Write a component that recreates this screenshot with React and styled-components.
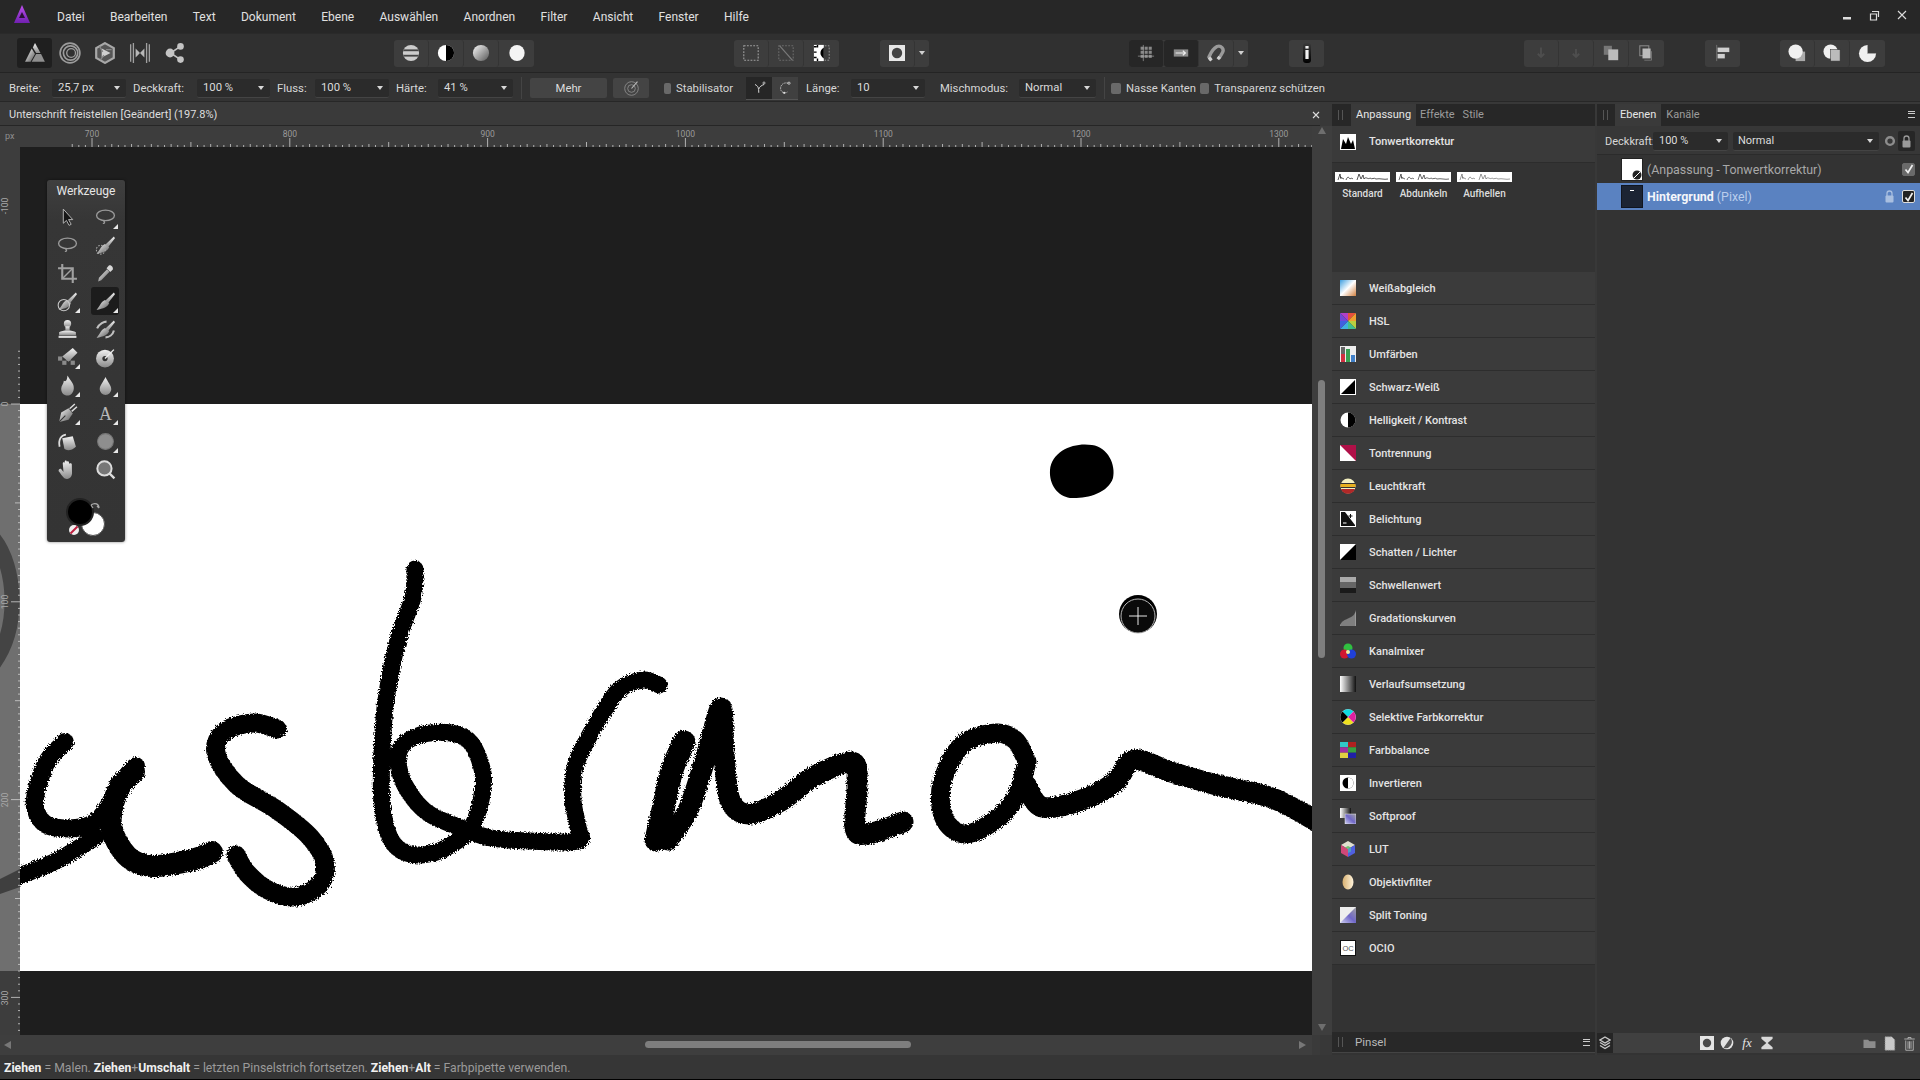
import React from 'react';
import styled, { createGlobalStyle } from 'styled-components';

const GlobalStyle = createGlobalStyle`
  html, body { margin: 0; padding: 0; background: #000; }
  body { font-family: Roboto, "Liberation Sans", sans-serif; }
`;

// catmull-rom through the points, good enough for handwriting
const smooth = pts => {
  let d = `M${pts[0][0]} ${pts[0][1]}`;
  for (let i = 0; i < pts.length - 1; i++) {
    const p0 = pts[i - 1] || pts[i];
    const p1 = pts[i];
    const p2 = pts[i + 1];
    const p3 = pts[i + 2] || p2;
    const c1 = [p1[0] + (p2[0] - p0[0]) / 6, p1[1] + (p2[1] - p0[1]) / 6];
    const c2 = [p2[0] - (p3[0] - p1[0]) / 6, p2[1] - (p3[1] - p1[1]) / 6];
    d += ` C${c1[0]} ${c1[1]} ${c2[0]} ${c2[1]} ${p2[0]} ${p2[1]}`;
  }
  return d;
};

const STROKES = [
  { w: 18, pts: [[65, 742], [48, 760], [38, 785], [35, 807], [47, 825], [76, 828], [98, 820], [115, 795], [129, 773], [136, 766]] },
  { w: 22, pts: [[134, 772], [118, 790], [111, 825], [127, 856], [152, 866], [192, 860], [212, 852]] },
  { w: 17, pts: [[96, 837], [58, 860], [22, 875], [0, 885]] },
  { w: 19, pts: [[277, 729], [254, 723], [225, 731], [216, 753], [237, 785], [277, 810], [310, 837], [325, 863], [319, 885], [295, 897], [268, 890], [247, 873], [236, 855]] },
  { w: 17, pts: [[415, 569], [413, 597], [398, 640], [386, 700], [382, 753], [382, 803], [390, 838], [406, 853], [429, 854], [451, 845], [471, 828], [481, 800], [483, 773], [471, 743], [451, 733], [420, 735], [400, 749], [400, 773], [413, 798], [431, 815], [464, 829], [491, 838], [530, 841], [578, 841], [578, 827], [573, 800], [575, 767], [592, 731], [618, 691], [643, 680], [659, 685]] },
  { w: 23, pts: [[656, 840], [664, 805], [672, 770], [684, 742]] },
  { w: 21, pts: [[668, 840], [689, 808], [707, 753], [721, 708], [724, 753], [730, 800], [749, 814], [781, 801], [813, 777], [852, 762], [857, 787], [855, 828], [868, 834], [903, 822]] },
  { w: 19, pts: [[1024, 755], [1015, 740], [996, 733], [962, 745], [942, 783], [944, 818], [964, 834], [994, 821], [1016, 797], [1027, 762]] },
  { w: 21, pts: [[1026, 785], [1042, 807], [1079, 801], [1114, 783], [1134, 760], [1171, 772], [1217, 785], [1272, 798], [1318, 822]] },
];

const PX_PER_100 = 197.8;

const Page = styled.div`
  width: 1920px;
  height: 1080px;
  display: flex;
  flex-direction: column;
  overflow: hidden;
  background: #000;
  color: #d6d6d6;
  font-size: 12px;
`;

const MenuBar = styled.div`
  height: 33px;
  flex: none;
  display: flex;
  align-items: center;
  background: #272727;
  padding: 1px 0 0 12px;
  box-sizing: border-box;
`;

const Logo = styled.svg`
  width: 20px;
  height: 22px;
  margin: -4px 25px 0 0;
  flex: none;
`;

const MenuItem = styled.div`
  margin-right: 25.4px;
  font-size: 12px;
  color: #e0e0e0;
`;

const WindowControls = styled.div`
  margin: -4px 0 0 auto;
  display: flex;
  align-items: center;
  gap: 17px;
  padding-right: 13px;
`;

const Toolbar = styled.div`
  height: 40px;
  flex: none;
  display: flex;
  align-items: center;
  background: #303030;
  border-top: 1px solid #2a2a2a;
  border-bottom: 1px solid #242424;
  box-sizing: border-box;
  padding-left: 17px;
`;

const ToolGroup = styled.div`
  display: flex;
  height: 27px;
  margin-left: ${p => p.$ml || 0}px;
  border-radius: 3px;
  background: ${p => (p.$plain ? 'transparent' : '#3d3d3d')};
`;

const ToolbarButton = styled.div`
  width: 35px;
  height: ${p => (p.$active ? 30 : 27)}px;
  margin-top: ${p => (p.$active ? -2 : 0)}px;
  display: flex;
  align-items: center;
  justify-content: center;
  box-sizing: border-box;
  border-radius: 3px;
  background: ${p => (p.$active ? '#1f1f1f' : p.$dark ? '#262626' : 'transparent')};
  border-right: ${p => (p.$plain ? 'none' : '1px solid #343434')};
  &:last-child { border-right: none; }
`;

const GroupArrow = styled.div`
  width: 14px;
  display: flex;
  align-items: center;
  justify-content: center;
  &::after {
    content: '';
    border: 3px solid transparent;
    border-top: 4px solid #d0d0d0;
    margin-top: 3px;
  }
`;

const ContextBar = styled.div`
  height: 29px;
  flex: none;
  display: flex;
  align-items: center;
  background: #333;
  padding: 2px 0 0 9px;
  font-size: 11.3px;
  box-sizing: border-box;
  border-bottom: 1px solid #272727;
`;

const FieldLabel = styled.div`
  width: ${p => p.$w}px;
  flex: none;
  white-space: nowrap;
  color: #d8d8d8;
`;

const Combo = styled.div`
  width: ${p => p.$w}px;
  height: 19px;
  flex: none;
  box-sizing: border-box;
  display: flex;
  align-items: center;
  padding-left: ${p => p.$pad || 6}px;
  margin-right: ${p => p.$mr ?? 7}px;
  background: #2b2b2b;
  border-bottom: 1px solid #444;
  border-radius: 2px;
  color: #dcdcdc;
  position: relative;
  &::after {
    content: '';
    position: absolute;
    right: 6px;
    top: 7px;
    border: 3px solid transparent;
    border-top: 4px solid #d8d8d8;
  }
`;

const Divider = styled.div`
  width: 1px;
  height: 22px;
  background: #444;
  margin: 0 ${p => p.$right ?? 8}px 0 ${p => p.$left ?? 1}px;
  flex: none;
`;

const FlatButton = styled.div`
  width: ${p => p.$w}px;
  height: 20px;
  flex: none;
  display: flex;
  align-items: center;
  justify-content: center;
  margin-right: 6px;
  background: #444;
  border-radius: 2px;
  color: #ddd;
`;

const CheckLabel = styled.div`
  display: flex;
  align-items: center;
  gap: 5px;
  flex: none;
  width: ${p => p.$w}px;
  margin-left: ${p => p.$ml || 0}px;
  white-space: nowrap;
  &::before {
    content: '';
    width: 10px;
    height: 11px;
    border-radius: 2px;
    background: #696969;
  }
`;

const ToggleGroup = styled.div`
  display: flex;
  flex: none;
  width: 52px;
  height: 22px;
  margin: 0 8px 0 13px;
  border-bottom: 1px solid #555;
`;

const ToggleHalf = styled.div`
  flex: 1;
  display: flex;
  align-items: center;
  justify-content: center;
  background: ${p => (p.$dark ? '#262626' : '#404040')};
`;

const Main = styled.div`
  height: 953px;
  flex: none;
  display: flex;
  background: #3a3a3a;
`;

const DocColumn = styled.div`
  width: 1320px;
  flex: none;
  display: flex;
  flex-direction: column;
`;

const DocTitle = styled.div`
  height: 24px;
  flex: none;
  display: flex;
  align-items: center;
  justify-content: space-between;
  box-sizing: border-box;
  padding: 2px 0 0 9px;
  background: #3a3a3a;
  border-bottom: 1px solid #262626;
  font-size: 11px;
  color: #dedede;
`;

const RulerRow = styled.div`
  height: 21px;
  flex: none;
  display: flex;
  background: #3d3d3d;
`;

const RulerCorner = styled.div`
  width: 20px;
  flex: none;
  font-size: 9px;
  color: #8f8f8f;
  padding: 5px 0 0 5px;
  box-sizing: border-box;
`;

const RulerSvg = styled.svg`
  display: block;
  flex: none;
`;

const ScrollTrackV = styled.div`
  width: 20px;
  flex: none;
  position: relative;
  background: #3e3e3e;
`;

const ViewRow = styled.div`
  height: 888px;
  flex: none;
  display: flex;
`;

const Viewport = styled.div`
  width: 1292px;
  height: 888px;
  flex: none;
  position: relative;
  display: flex;
  flex-direction: column;
  background: #1e1e1e;
`;

const Artboard = styled.svg`
  display: block;
  width: 1292px;
  height: 567px;
  margin-top: 257px;
  background: #fff;
`;

const ThumbV = styled.div`
  position: absolute;
  left: 6px;
  top: 233px;
  width: 7px;
  height: 278px;
  border-radius: 4px;
  background: #7e7e7e;
`;

const Arrow = styled.div`
  position: absolute;
  width: 0;
  height: 0;
  border: 4px solid transparent;
  ${p => p.$dir === 'up' && `border-bottom: 7px solid #6e6e6e; left: 6px; top: -3px;`}
  ${p => p.$dir === 'down' && `border-top: 7px solid #6e6e6e; left: 6px; bottom: 0px;`}
  ${p => p.$dir === 'left' && `border-right: 7px solid #777; left: 0px; top: 6px;`}
  ${p => p.$dir === 'right' && `border-left: 7px solid #777; right: 2px; top: 6px;`}
`;

const ScrollTrackH = styled.div`
  height: 20px;
  flex: none;
  position: relative;
  background: #3e3e3e;
  margin-right: 8px;
`;

const ThumbH = styled.div`
  position: absolute;
  left: 645px;
  top: 6px;
  width: 266px;
  height: 7px;
  border-radius: 4px;
  background: #7e7e7e;
`;

const ToolsPanel = styled.div`
  position: absolute;
  left: 27px;
  top: 33px;
  width: 78px;
  height: 362px;
  box-sizing: border-box;
  background: linear-gradient(#3f3f3f, #363636 40px, #343434);
  border-radius: 3px;
  box-shadow: 0 0 3px rgba(0, 0, 0, 0.5);
`;

const ToolsTitle = styled.div`
  height: 22px;
  line-height: 22px;
  text-align: center;
  font-size: 12px;
  color: #e6e6e6;
`;

const ToolsGrid = styled.div`
  display: grid;
  grid-template-columns: 28px 28px;
  grid-auto-rows: 28px;
  column-gap: 10px;
  padding: 1px 0 0 6px;
`;

const ToolButton = styled.div`
  position: relative;
  display: flex;
  align-items: center;
  justify-content: center;
  border-radius: 3px;
  background: ${p => (p.$active ? '#1c1c1c' : 'transparent')};
  ${p =>
    p.$more &&
    `&::after {
      content: '';
      position: absolute;
      right: 1px;
      bottom: 2px;
      border-style: solid;
      border-width: 0 0 5px 5px;
      border-color: transparent transparent #e8e8e8 transparent;
    }`}
`;

const ColorChips = styled.svg`
  display: block;
  width: 78px;
  height: 70px;
`;

const Dock = styled.div`
  flex: 1;
  display: flex;
  padding: 2px 0 0 12px;
  gap: 2px;
  background: #383838;
`;

const AdjustColumn = styled.div`
  width: 263px;
  flex: none;
  display: flex;
  flex-direction: column;
  background: #333;
`;

const LayersColumn = styled.div`
  flex: 1;
  display: flex;
  flex-direction: column;
  background: #333;
`;

const TabBar = styled.div`
  height: 22px;
  flex: none;
  display: flex;
  align-items: stretch;
  position: relative;
  background: #272727;
  font-size: 11px;
  line-height: 21px;
  padding-left: ${p => p.$pad}px;
`;

const Grip = styled.div`
  position: absolute;
  left: ${p => p.$left ?? 6}px;
  top: 50%;
  margin-top: -5px;
  width: 3px;
  height: 10px;
  border-left: 1px solid #555;
  border-right: 1px solid #555;
`;

const Tab = styled.div`
  display: flex;
  align-items: flex-start;
  padding: 0 ${p => p.$px ?? 5}px;
  color: ${p => (p.$active ? '#e6e6e6' : '#9c9c9c')};
  background: ${p => (p.$active ? '#3a3a3a' : 'transparent')};
`;

const PanelMenu = styled.div`
  position: absolute;
  right: ${p => p.$right ?? 4}px;
  top: 7px;
  width: 7px;
  height: 5px;
  border-top: 1.5px solid #ccc;
  border-bottom: 1.5px solid #ccc;
  &::before {
    content: '';
    display: block;
    height: 1.5px;
    margin-top: 0.7px;
    background: #ccc;
  }
`;

const AdjustHeader = styled.div`
  height: 37px;
  flex: none;
  display: flex;
  align-items: center;
  box-sizing: border-box;
  padding: 0 0 5px 8px;
  gap: 13px;
  background: #3a3a3a;
  border-bottom: 1px solid #2c2c2c;
  font-weight: 500;
  font-size: 11px;
  color: #e4e4e4;
`;

const Presets = styled.div`
  height: 109px;
  flex: none;
  display: flex;
  gap: 6px;
  padding: 9px 0 0 3px;
  box-sizing: border-box;
`;

const Preset = styled.div`
  width: 55px;
  display: flex;
  flex-direction: column;
  align-items: center;
  gap: 6px;
  font-size: 10px;
  font-weight: 500;
  color: #ddd;
`;

const PresetThumb = styled.svg`
  width: 55px;
  height: 10px;
  display: block;
  background: #fff;
`;

const AdjustRow = styled.div`
  height: 33px;
  flex: none;
  display: flex;
  align-items: center;
  box-sizing: border-box;
  padding-left: 8px;
  gap: 13px;
  background: #3b3b3b;
  border-bottom: 1px solid #2d2d2d;
  font-weight: 500;
  font-size: 11px;
  color: #e4e4e4;
`;

const Spacer = styled.div`
  flex: 1;
`;

const BrushTab = styled.div`
  height: 21px;
  flex: none;
  margin-bottom: 2px;
  display: flex;
  align-items: center;
  position: relative;
  padding-left: 23px;
  background: #282828;
  border-bottom: 1px solid #444;
  box-sizing: border-box;
  font-size: 11.5px;
  color: #b8b8b8;
`;

const LayerTools = styled.div`
  height: 29px;
  flex: none;
  display: flex;
  align-items: center;
  box-sizing: border-box;
  padding: 2px 0 0 8px;
  background: #373737;
  border-bottom: 1px solid #2b2b2b;
  font-size: 11px;
  color: #d8d8d8;
`;

const LockBox = styled.div`
  width: 17px;
  height: 20px;
  margin-left: 1px;
  display: flex;
  align-items: center;
  justify-content: center;
  background: #262626;
  border-radius: 2px;
`;

const LayerRow = styled.div`
  height: ${p => p.$h}px;
  flex: none;
  display: flex;
  align-items: center;
  box-sizing: border-box;
  padding: 0 5px 0 24px;
  gap: 4px;
  background: ${p => (p.$selected ? '#5a82c1' : 'transparent')};
  font-size: 12.4px;
  color: ${p => (p.$selected ? '#b9cdec' : '#a8a8a8')};
  b { color: #f4f6fa; font-weight: 700; }
`;

const LayerThumb = styled.svg`
  width: 22px;
  height: 23px;
  flex: none;
  display: block;
`;

const LayerCheck = styled.div`
  width: 11px;
  height: 11px;
  margin-left: ${p => (p.$auto ? 'auto' : '0')};
  display: flex;
  align-items: center;
  justify-content: center;
  flex: none;
  background: ${p => (p.$dark ? '#222' : '#6a6a6a')};
  border: 1px solid ${p => (p.$dark ? '#ddd' : '#6a6a6a')};
  border-radius: 2px;
`;

const LayerLock = styled.div`
  display: flex;
  margin-left: auto;
  margin-right: 4px;
`;

const LayersBottom = styled.div`
  height: 20px;
  flex: none;
  display: flex;
  align-items: center;
  background: #404040;
  margin-bottom: 2px;
`;

const BottomIcon = styled.div`
  width: ${p => p.$w || 20}px;
  height: 20px;
  margin-left: ${p => p.$ml || 0}px;
  display: flex;
  align-items: center;
  justify-content: center;
  flex: none;
  background: ${p => (p.$dark ? '#252525' : 'transparent')};
`;

const FxIcon = styled(BottomIcon)`
  font-family: "Liberation Serif", serif;
  font-style: italic;
  font-size: 13px;
  color: #e4e4e4;
`;

const StatusBar = styled.div`
  height: 24px;
  flex: none;
  display: flex;
  align-items: center;
  box-sizing: border-box;
  padding: 1px 0 0 4px;
  background: #363636;
  font-size: 12.2px;
  color: #9a9a9a;
  white-space: pre;
  b { color: #f0f0f0; font-weight: 700; }
`;

const BottomEdge = styled.div`
  height: 1px;
  flex: none;
  background: #000;
`;

/* ---------- small svg bits ---------- */

const Svg = ({ size = 20, children, box = 20 }) => (
  <svg width={size} height={size} viewBox={`0 0 ${box} ${box}`}>
    {children}
  </svg>
);

const GreyDefs = () => (
  <defs>
    <linearGradient id="g1" x1="0" y1="0" x2="0" y2="1">
      <stop offset="0" stopColor="#f2f2f2" />
      <stop offset="1" stopColor="#8a8a8a" />
    </linearGradient>
    <linearGradient id="g2" x1="0" y1="0" x2="1" y2="1">
      <stop offset="0" stopColor="#fafafa" />
      <stop offset="1" stopColor="#555" />
    </linearGradient>
    <linearGradient id="g3" x1="0" y1="0" x2="1" y2="0">
      <stop offset="0" stopColor="#fff" />
      <stop offset="1" stopColor="#111" />
    </linearGradient>
    <linearGradient id="wb" x1="0" y1="0" x2="1" y2="1">
      <stop offset="0" stopColor="#3f9fe0" />
      <stop offset="0.5" stopColor="#fff" />
      <stop offset="1" stopColor="#d08040" />
    </linearGradient>
    <linearGradient id="sp" x1="0" y1="1" x2="1" y2="0">
      <stop offset="0" stopColor="#cfd0f0" />
      <stop offset="0.5" stopColor="#7068c8" />
      <stop offset="1" stopColor="#a0a0a0" />
    </linearGradient>
    <linearGradient id="of" x1="0" y1="0" x2="1" y2="0">
      <stop offset="0" stopColor="#d8b070" />
      <stop offset="1" stopColor="#fff4dc" />
    </linearGradient>
  </defs>
);

const brushShape = (
  <g>
    <path d="M18 1.5 L10 9 L12.5 11.5 L19 3 Z" fill="url(#g1)" />
    <path d="M9.5 8.5 C6 10 5 13.5 1.5 18 C8 17 12.5 15 13.5 11.5 Z" fill="url(#g2)" />
  </g>
);

const HSL_WEDGES = [
  ['M8 8 L0 0 H8 Z', '#b040c8'],
  ['M8 8 L8 0 H16 Z', '#e8503c'],
  ['M8 8 L16 0 V8 Z', '#f0a030'],
  ['M8 8 L16 8 V16 Z', '#b8d040'],
  ['M8 8 L16 16 H8 Z', '#40c090'],
  ['M8 8 L8 16 H0 Z', '#40b0e0'],
  ['M8 8 L0 16 V8 Z', '#4060e0'],
  ['M8 8 L0 8 V0 Z', '#7048d8'],
];

const LUT_FACES = (
  <g>
    <path d="M8 0 L15 4 L8 8 L1 4 Z" fill="#e0e0d0" />
    <path d="M1 4 L8 8 V16 L1 12 Z" fill="#d04878" />
    <path d="M15 4 L8 8 V16 L15 12 Z" fill="#5060e0" />
    <path d="M8 8 L11 6.5 L8 5 L5 6.5 Z" fill="#70c070" />
    <path d="M8 8 V12 L11 10.5 V6.5 Z" fill="#50a0c0" />
  </g>
);

const TOOL_ICONS = [
  { more: false, icon: <path d="M6 2 V15.5 L9 12.8 L11.5 17.5 L13.5 16.5 L11 12 H15 Z" fill="#161616" stroke="#b8b8b8" strokeWidth="0.9" /> },
  { more: true, icon: <g fill="none" stroke="#9a9a9a" strokeWidth="1.3"><ellipse cx="10" cy="8" rx="8.5" ry="5" /><path d="M8 13 C10 14.5 9 16 7.5 15.5" /></g> },
  { more: false, icon: <g fill="none" stroke="#9a9a9a" strokeWidth="1.3"><ellipse cx="10" cy="8" rx="8.5" ry="5" /><path d="M8 13 C10 14.5 9 16 7.5 15.5" /></g> },
  { more: false, icon: <g>{brushShape}<circle cx="5.5" cy="14" r="4.2" fill="none" stroke="#aaa" strokeDasharray="1.5 1.3" /></g> },
  { more: false, icon: <g fill="none" stroke="#a0a0a0" strokeWidth="2"><path d="M5 1 V15 H19" /><path d="M1 5 H15 V19" /><path d="M5 15 L15 5" strokeWidth="1.4" /></g> },
  { more: false, icon: <g><path d="M13 2.5 C15 1 18 4 16.8 6.5 L14.5 8.5 L11 5 Z" fill="#d8d8d8" /><path d="M11.5 6 L13.8 8.3 L6 16.5 L3 17.5 L3.8 14 Z" fill="url(#g2)" /></g> },
  { more: true, icon: <g>{brushShape}<circle cx="6.5" cy="13.5" r="5.4" fill="none" stroke="#c8c8c8" strokeWidth="1" /></g> },
  { more: true, icon: brushShape },
  { more: false, icon: <g fill="url(#g1)"><ellipse cx="10" cy="4.5" rx="3.5" ry="3.5" /><path d="M8 7 H12 V11 H8 Z" /><path d="M2 12.5 C5 10.5 15 10.5 18 12.5 V15.5 H2 Z" /><rect x="1.5" y="16" width="17" height="2" fill="#ddd" /></g> },
  { more: false, icon: <g>{brushShape}<path d="M2 9 C4 4 9 2.5 11 2.5 M18 11 C17 15 13.5 17.5 10 17.5" fill="none" stroke="#c0c0c0" strokeWidth="2" /></g> },
  { more: true, icon: <g><g fill="#8a8a8a"><rect x="1" y="9" width="4" height="4" /><rect x="9" y="9" width="4" height="4" /><rect x="5" y="13" width="4" height="4" /><rect x="13" y="13" width="4" height="4" /></g><path d="M15 1 L19.5 5.5 L11 14 L5 9 Z" fill="url(#g1)" /></g> },
  { more: false, icon: <g><circle cx="9.5" cy="11" r="8.5" fill="url(#g1)" /><circle cx="9.5" cy="11" r="2.5" fill="#333" /><path d="M9.5 11 L18 2.5" stroke="#eee" strokeWidth="1.3" /></g> },
  { more: true, icon: <path d="M10 .5 C12.5 5.5 16.5 8 16 13 C15.5 17.5 12.5 19.5 10 19.5 C6.5 19.5 4 17 4 13 C4 10 6.5 8.5 6.5 5.5 C8 6.5 9.5 6 10 .5 Z" fill="url(#g1)" /> },
  { more: true, icon: <path d="M10 2 C12 6.5 15.5 10 15.5 13.5 A5.5 5.5 0 0 1 4.5 13.5 C4.5 10 8 6.5 10 2 Z" fill="url(#g1)" /> },
  { more: true, icon: <g><path d="M2 18 L4 9 L11 5 L15 10 L11 16 Z" fill="url(#g2)" /><path d="M2 18 L8 12" stroke="#333" /><path d="M12 5.5 L17 1 M14 8 L19 3.5" stroke="#ddd" strokeWidth="1.4" /></g> },
  { more: true, icon: <text x="10" y="16" fontSize="17" textAnchor="middle" fill="#b8b8b8" fontFamily="'Liberation Serif', serif">A</text> },
  { more: false, icon: <g><path d="M5 7 L15 5 L18 15 C14 19 9 19 7 17 Z" fill="url(#g1)" /><path d="M2.5 15 C1 8 4 4 8.5 3.5" fill="none" stroke="#ddd" strokeWidth="1.7" /></g> },
  { more: true, icon: <circle cx="10" cy="10" r="7.5" fill="#8e8e8e" stroke="#777" /> },
  { more: false, icon: <path d="M4 9 L6 12 V4 C6 2.5 8 2.5 8 4 V2.5 C8 1 10 1 10 2.5 V3 C10 2 12 2 12 3.5 V5 C12 4 14.5 4 14.5 5.5 L14 14 C13.5 17.5 11 19 9 19 C6 19 5 16.5 1.5 11 C1 9.5 3 8 4 9 Z" fill="url(#g1)" transform="rotate(-5 10 10)" /> },
  { more: false, icon: <g><circle cx="9" cy="9" r="6.8" fill="#777" stroke="#ddd" strokeWidth="1.9" /><path d="M13.5 13.5 L18.5 18.5" stroke="#ddd" strokeWidth="2.2" /></g> },
];

const ADJUST_ICONS = {
  levels: <g><rect width="16" height="16" fill="#fff" /><path d="M1 15 L3 5 L6 10 L8 3 L11 10 L13 6 L15 15 Z" fill="#000" /></g>,
  wb: <rect width="16" height="16" fill="url(#wb)" />,
  hsl: <g>{HSL_WEDGES.map(([d, c]) => <path key={d} d={d} fill={c} />)}</g>,
  recolor: <g><rect width="16" height="16" fill="#eee" /><rect x="1" y="8" width="4" height="8" fill="#d03040" /><rect x="1" y="1" width="4" height="7" fill="#666" /><rect x="6" y="3" width="4" height="13" fill="#38a050" /><rect x="11" y="9" width="4" height="7" fill="#4080c8" /></g>,
  bw: <g><rect width="16" height="16" fill="#fff" /><path d="M15 1 V15 H1 Z" fill="#000" /></g>,
  brightness: <g><circle cx="8" cy="8" r="7.5" fill="#fff" /><path d="M8 .5 A7.5 7.5 0 0 1 8 15.5 Z" fill="#000" /></g>,
  poster: <g><rect width="16" height="16" fill="#fff" /><path d="M0 0 H16 V16 Z" fill="#b01048" /></g>,
  lum: <g><circle cx="8" cy="8" r="7.5" fill="#f4f0c0" /><path d="M.5 6 H15.5 V9 H.5 Z" fill="#e8b020" /><path d="M1 11 H15 A7.5 7.5 0 0 1 1 11 Z" fill="#b02828" /><path d="M.5 5 H15.5 V6 H.5 Z M.8 9 H15.2 V10 H.8 Z" fill="#333" /></g>,
  exposure: <g><rect width="16" height="16" fill="#fff" /><path d="M1 1 H5 L15 14 V15 H1 Z" fill="#111" /><path d="M8.5 5 H12.5 M10.5 3 V7" stroke="#111" /><path d="M3 12 H6.5" stroke="#fff" /></g>,
  shadows: <g><rect width="16" height="16" fill="#fff" /><path d="M16 0 V16 H0 Z" fill="#000" /></g>,
  threshold: <g><rect width="16" height="5" fill="#aaa" /><rect y="5" width="16" height="6" fill="#666" /><rect y="11" width="16" height="5" fill="#1a1a1a" /></g>,
  curves: <g><path d="M0 16 C1 11 5 10 9 8 C12 7 15 5 16 0 V16 Z" fill="#999" /><path d="M2 16 V11 M4 16 V10 M6 16 V9 M8 16 V8 M10 16 V7 M12 16 V6 M14 16 V4" stroke="#444" strokeWidth=".6" /></g>,
  mixer: <g><circle cx="8" cy="5" r="4.5" fill="#30c040" /><circle cx="4.5" cy="11" r="4.5" fill="#d01830" /><circle cx="11.5" cy="11" r="4.5" fill="#2040d8" /><circle cx="8" cy="9" r="2" fill="#f0f0a0" /></g>,
  gradient: <rect width="16" height="16" fill="url(#g3)" />,
  selective: <g><circle cx="8" cy="8" r="7.8" fill="#fff" /><path d="M8 8 L2.5 2.5 A7.8 7.8 0 0 1 13.5 2.5 Z" fill="#10d8e0" /><path d="M8 8 L13.5 13.5 A7.8 7.8 0 0 1 2.5 13.5 Z" fill="#f0e020" /><path d="M8 8 L2.5 2.5 A7.8 7.8 0 0 0 2.5 13.5 Z" fill="#000" /><path d="M8 8 L13.5 2.5 A7.8 7.8 0 0 1 13.5 13.5 Z" fill="#e020a0" /></g>,
  balance: <g><rect width="8" height="5.3" fill="#30c8c8" /><rect x="8" width="8" height="5.3" fill="#b02020" /><rect y="5.3" width="8" height="5.4" fill="#a030a0" /><rect x="8" y="5.3" width="8" height="5.4" fill="#38a040" /><rect y="10.7" width="8" height="5.3" fill="#e0d040" /><rect x="8" y="10.7" width="8" height="5.3" fill="#2020a8" /></g>,
  invert: <g><rect width="16" height="16" fill="#fff" /><circle cx="8" cy="8" r="5.5" fill="#000" /><path d="M8 2.5 A5.5 5.5 0 0 1 8 13.5 Z" fill="#fff" /></g>,
  softproof: <g><rect width="11" height="10" fill="url(#g3)" /><rect x="5" y="6" width="11" height="10" fill="url(#sp)" stroke="#eee" strokeWidth=".5" /></g>,
  lut: LUT_FACES,
  lens: <ellipse cx="8" cy="8" rx="5.5" ry="7.5" fill="url(#of)" />,
  split: <g><rect width="16" height="16" fill="#eee" /><path d="M16 0 V16 H0 Z" fill="url(#sp)" /></g>,
  ocio: <g><rect x=".5" y=".5" width="15" height="15" fill="#fff" stroke="#111" /><text x="8" y="11" fontSize="7.5" textAnchor="middle" fill="#555" fontFamily="'Liberation Sans', sans-serif">OC</text></g>,
};

const ADJUSTMENTS = [
  ['wb', 'Weißabgleich'],
  ['hsl', 'HSL'],
  ['recolor', 'Umfärben'],
  ['bw', 'Schwarz-Weiß'],
  ['brightness', 'Helligkeit / Kontrast'],
  ['poster', 'Tontrennung'],
  ['lum', 'Leuchtkraft'],
  ['exposure', 'Belichtung'],
  ['shadows', 'Schatten / Lichter'],
  ['threshold', 'Schwellenwert'],
  ['curves', 'Gradationskurven'],
  ['mixer', 'Kanalmixer'],
  ['gradient', 'Verlaufsumsetzung'],
  ['selective', 'Selektive Farbkorrektur'],
  ['balance', 'Farbbalance'],
  ['invert', 'Invertieren'],
  ['softproof', 'Softproof'],
  ['lut', 'LUT'],
  ['lens', 'Objektivfilter'],
  ['split', 'Split Toning'],
  ['ocio', 'OCIO'],
];

const AdjustIconBox = styled.svg`
  flex: none;
  display: block;
`;

const AdjustIcon = ({ name }) => (
  <AdjustIconBox width="16" height="16" viewBox="0 0 16 16">
    {ADJUST_ICONS[name]}
  </AdjustIconBox>
);

const Lock = ({ color = '#cfcfcf' }) => (
  <svg width="9" height="13" viewBox="0 0 9 13">
    <path d="M2 6 V3.5 A2.5 2.5 0 0 1 7 3.5 V6" fill="none" stroke={color} strokeWidth="1.3" />
    <rect x="0.5" y="5.5" width="8" height="7" rx="1" fill={color} />
  </svg>
);

const Check = () => (
  <svg width="10" height="10" viewBox="0 0 10 10">
    <path d="M1.5 5.5 L4 8.5 L8.5 1" fill="none" stroke="#f0f0f0" strokeWidth="1.7" />
  </svg>
);

const HRuler = () => {
  const ticks = [];
  for (let i = -3; i < 200; i++) {
    const x = 72 + (i * PX_PER_100) / 30;
    if (x < 0 || x > 1292) continue;
    const h = i % 30 === 0 ? 9 : i % 15 === 0 ? 5 : i % 3 === 0 ? 3 : 2;
    ticks.push(<line key={i} x1={x} x2={x} y1={21 - h} y2={21} stroke="#cfcfcf" strokeWidth="0.8" />);
  }
  const labels = [700, 800, 900, 1000, 1100, 1200, 1300];
  return (
    <RulerSvg width="1292" height="21">
      {ticks}
      {labels.map((l, i) => (
        <text key={l} x={72 + i * PX_PER_100} y="11" fontSize="8.5" textAnchor="middle" fill="#9a9a9a">
          {l}
        </text>
      ))}
    </RulerSvg>
  );
};

const VRuler = () => {
  const ticks = [];
  for (let i = -8; i < 135; i++) {
    const y = 257 + (i * PX_PER_100) / 30;
    if (y < 0) continue;
    const w = i % 30 === 0 ? 9 : i % 15 === 0 ? 5 : 2;
    ticks.push(<line key={i} y1={y} y2={y} x1={20 - w} x2={20} stroke="#cfcfcf" strokeWidth="0.8" />);
  }
  const labels = [[-100, 59], [0, 257], [100, 455], [200, 653], [300, 851]];
  return (
    <RulerSvg width="20" height="888">
      <rect width="20" height="888" fill="#3d3d3d" />
      <rect y="257" width="20" height="567" fill="#6f6f6f" />
      <path d="M-6 392 C16 420 20 480 -6 516" fill="none" stroke="#444" strokeWidth="15" />
      <path d="M0 732 L20 722 L20 740 L0 747 Z" fill="#3f3f3f" />
      {ticks}
      {labels.map(([l, y]) => (
        <text key={l} fontSize="8.5" textAnchor="middle" fill="#a8a8a8" transform={`translate(8 ${y}) rotate(-90)`}>
          {l}
        </text>
      ))}
    </RulerSvg>
  );
};

const Signature = () => (
  <Artboard viewBox="20 404 1292 567">
    <defs>
      <filter id="rough" x="-5%" y="-5%" width="110%" height="110%">
        <feTurbulence type="fractalNoise" baseFrequency="0.7" numOctaves="2" seed="4" />
        <feDisplacementMap in="SourceGraphic" scale="5" />
      </filter>
    </defs>
    <g filter="url(#rough)" fill="none" stroke="#000" strokeLinecap="round" strokeLinejoin="round">
      {STROKES.map((s, i) => (
        <path key={i} d={smooth(s.pts)} strokeWidth={s.w} />
      ))}
    </g>
    <path d="M1050 470 C1052 450 1075 442 1092 445 C1108 447 1116 465 1113 478 C1108 494 1085 499 1070 498 C1058 496 1049 485 1050 470 Z" fill="#000" />
    <circle cx="1138" cy="614" r="19" fill="#000" />
    <circle cx="1138" cy="616" r="17" fill="#0a0a0a" stroke="#b8b8b8" strokeWidth="1" />
    <path d="M1138 607 V625 M1129 616 H1147" stroke="#fff" strokeWidth="0.9" />
  </Artboard>
);

const PresetSig = ({ op = 1 }) => (
  <PresetThumb viewBox="0 0 55 10">
    <path d="M3 8 L5 2 L6 7 M5 5 L9 7 M11 8 C13 3 14 6 15 7 C16 6 17 6 18 7 M22 8 L24 2 L26 7 L28 3 L29 7 C31 4 33 8 35 6 C37 8 39 5 41 7 C45 6 49 8 53 7" fill="none" stroke="#111" strokeWidth="0.7" opacity={op} />
  </PresetThumb>
);

const MENU = ['Datei', 'Bearbeiten', 'Text', 'Dokument', 'Ebene', 'Auswählen', 'Anordnen', 'Filter', 'Ansicht', 'Fenster', 'Hilfe'];

export default function App() {
  return (
    <Page>
      <GlobalStyle />
      <MenuBar>
        <Logo viewBox="0 0 20 22">
          <defs>
            <linearGradient id="logo" x1="0" y1="0" x2="0" y2="1">
              <stop offset="0" stopColor="#c050f0" />
              <stop offset="1" stopColor="#7020b0" />
            </linearGradient>
          </defs>
          <path d="M10 1 L18 19 H2 Z" fill="url(#logo)" />
          <path d="M10 8 L13 14 H7 Z" fill="#2a1038" />
        </Logo>
        {MENU.map(m => (
          <MenuItem key={m}>{m}</MenuItem>
        ))}
        <WindowControls>
          <svg width="10" height="10" viewBox="0 0 10 10"><rect x="1" y="7" width="8" height="2.5" fill="#ddd" /></svg>
          <svg width="11" height="11" viewBox="0 0 11 11"><path d="M3 1.5 H9.5 V7 M1.5 4 H7.5 V10 H1.5 Z" fill="none" stroke="#ddd" strokeWidth="1.2" /></svg>
          <svg width="10" height="10" viewBox="0 0 10 10"><path d="M1 1 L9 9 M9 1 L1 9" stroke="#ddd" strokeWidth="1.1" /></svg>
        </WindowControls>
      </MenuBar>

      <Toolbar>
        <ToolGroup $plain>
          <ToolbarButton $active $plain>
            <Svg size={22}>
              <GreyDefs />
              <path d="M10 1 L15 10 L11 10 L8 5 Z" fill="url(#g1)" />
              <path d="M7 6 L10 11 L6 18 H1 Z" fill="url(#g2)" />
              <path d="M11 11 H15.5 L19 18 H7 Z" fill="#8f8f8f" />
            </Svg>
          </ToolbarButton>
          <ToolbarButton $plain>
            <Svg size={22}>
              <g fill="none" stroke="#9c9c9c">
                <circle cx="10" cy="10" r="9" strokeWidth="1.5" />
                <circle cx="10.5" cy="10" r="6.5" strokeWidth="1.5" />
                <circle cx="11" cy="10" r="4" strokeWidth="1.2" />
              </g>
            </Svg>
          </ToolbarButton>
          <ToolbarButton $plain>
            <Svg size={22}>
              <path d="M10 1 L18 5.5 V14.5 L10 19 L2 14.5 V5.5 Z" fill="#555" stroke="#a8a8a8" strokeWidth="2" />
              <path d="M7 6 L15 10 L7 14 Z" fill="#cfcfcf" />
              <path d="M5 4 L8 9 M16 7 L11 7 M6 16 L9 12" stroke="#888" strokeWidth="1.2" />
            </Svg>
          </ToolbarButton>
          <ToolbarButton $plain>
            <Svg size={22}>
              <path d="M1.5 2 V18 M4 1 V19 M16 1 V19 M18.5 2 V18" stroke="#a0a0a0" strokeWidth="1.2" />
              <path d="M6 6 L10 10 L6 14 Z M14 6 L10 10 L14 14 Z" fill="#b8b8b8" />
            </Svg>
          </ToolbarButton>
          <ToolbarButton $plain>
            <Svg size={22}>
              <path d="M6 10 L15 4 M6 10 L15 16" stroke="#c0c0c0" strokeWidth="1.4" />
              <circle cx="5.5" cy="10" r="4" fill="#c4c4c4" />
              <circle cx="15" cy="4" r="3" fill="#c4c4c4" />
              <circle cx="15" cy="16" r="3" fill="#c4c4c4" />
            </Svg>
          </ToolbarButton>
        </ToolGroup>

        <ToolGroup $ml={202}>
          <ToolbarButton>
            <Svg size={18}>
              <clipPath id="c1"><circle cx="10" cy="10" r="9" /></clipPath>
              <g clipPath="url(#c1)">
                <rect width="20" height="20" fill="#ccc" />
                <rect y="6" width="20" height="2" fill="#444" />
                <rect y="12" width="20" height="2" fill="#444" />
              </g>
            </Svg>
          </ToolbarButton>
          <ToolbarButton>
            <Svg size={18}>
              <circle cx="10" cy="10" r="9" fill="#fff" />
              <path d="M10 1 A9 9 0 0 1 10 19 Z" fill="#000" />
            </Svg>
          </ToolbarButton>
          <ToolbarButton>
            <Svg size={18}>
              <circle cx="10" cy="10" r="9" fill="url(#g2)" />
            </Svg>
          </ToolbarButton>
          <ToolbarButton>
            <Svg size={18}>
              <ellipse cx="10" cy="10" rx="8.5" ry="9" fill="#f4f4f4" />
            </Svg>
          </ToolbarButton>
        </ToolGroup>

        <ToolGroup $ml={200}>
          <ToolbarButton>
            <Svg size={18}>
              <rect x="2" y="2" width="16" height="16" fill="none" stroke="#a0a0a0" strokeWidth="1.2" strokeDasharray="2 1.5" />
            </Svg>
          </ToolbarButton>
          <ToolbarButton>
            <Svg size={18}>
              <rect x="2" y="2" width="16" height="16" fill="none" stroke="#6a6a6a" strokeWidth="1.2" strokeDasharray="2 1.5" />
              <path d="M3 2 L17 18" stroke="#7a7a7a" strokeWidth="1.3" />
            </Svg>
          </ToolbarButton>
          <ToolbarButton>
            <Svg size={18}>
              <rect x="1" y="1" width="11" height="18" fill="#fff" />
              <path d="M1 3 H4 M1 9 H4 M1 15 H4 M5 1 V4 M5 16 V19" stroke="#000" strokeWidth="1.6" />
              <path d="M12 4 C7 7 7 13 12 16 Z" fill="#000" />
              <path d="M13 2 H18 V18 H13" fill="none" stroke="#a0a0a0" strokeDasharray="2 1.5" />
            </Svg>
          </ToolbarButton>
        </ToolGroup>

        <ToolGroup $ml={41}>
          <ToolbarButton>
            <Svg size={16}>
              <rect width="20" height="20" fill="#e8e8e8" />
              <circle cx="10" cy="10" r="6.5" fill="#444" />
            </Svg>
          </ToolbarButton>
          <GroupArrow />
        </ToolGroup>

        <ToolGroup $ml={200}>
          <ToolbarButton $dark>
            <Svg size={18}>
              <g fill="#888">
                {[4, 8.5, 13].map(x => [3, 7.5, 12].map(y => <rect key={`${x}${y}`} x={x} y={y} width="3.4" height="3.4" />))}
              </g>
              <path d="M1 13.5 H19 M7 1 V19" stroke="#aaa" strokeWidth=".7" />
            </Svg>
          </ToolbarButton>
          <ToolbarButton $dark>
            <Svg size={18}>
              <rect x="2" y="6" width="16" height="8" fill="#8c8c8c" />
              <path d="M4 10 H15 M12 7.5 L15 10 L12 12.5" stroke="#eee" fill="none" strokeWidth="1.2" />
            </Svg>
          </ToolbarButton>
          <ToolbarButton>
            <Svg size={20}>
              <path d="M5 17 L3 14 C5 9 8 5 11 3.5 C15 2 18.5 6 16.5 9.5 L13 15.5" fill="none" stroke="#9a9a9a" strokeWidth="3.4" />
              <path d="M5.5 17.5 L3 14.5 M14 16 L11.5 14" stroke="#d0d0d0" strokeWidth="3" />
            </Svg>
          </ToolbarButton>
          <GroupArrow />
        </ToolGroup>

        <ToolGroup $ml={41}>
          <ToolbarButton>
            <svg width="10" height="20" viewBox="0 0 10 20">
              <defs>
                <linearGradient id="assist" x1="0" y1="0" x2="0" y2="1">
                  <stop offset="0" stopColor="#3a3a3a" />
                  <stop offset="1" stopColor="#000" />
                </linearGradient>
              </defs>
              <rect x="1" y="0" width="8" height="20" rx="3" fill="url(#assist)" />
              <rect x="3.4" y="3" width="3.2" height="2.6" fill="#f2f2f2" />
              <rect x="3.4" y="7" width="3.2" height="9" fill="#f2f2f2" />
            </svg>
          </ToolbarButton>
        </ToolGroup>

        <ToolGroup $ml={200}>
          <ToolbarButton>
            <Svg size={16}><path d="M10 3 V15 M6 11 L10 15 L14 11" stroke="#4e4e4e" strokeWidth="2.4" fill="none" /></Svg>
          </ToolbarButton>
          <ToolbarButton>
            <Svg size={16}><path d="M10 5 V15 M6 11 L10 15 L14 11" stroke="#4e4e4e" strokeWidth="2.4" fill="none" /></Svg>
          </ToolbarButton>
          <ToolbarButton>
            <Svg size={18}>
              <rect x="2" y="2" width="9" height="10" fill="#777" />
              <rect x="7" y="6" width="11" height="12" fill="#bcbcbc" />
            </Svg>
          </ToolbarButton>
          <ToolbarButton>
            <Svg size={18}>
              <rect x="2" y="2" width="10" height="11" fill="none" stroke="#888" strokeWidth="1.2" />
              <rect x="5" y="5" width="9" height="11" fill="#bcbcbc" />
              <path d="M15 8 V18 H7" fill="none" stroke="#777" />
            </Svg>
          </ToolbarButton>
        </ToolGroup>

        <ToolGroup $ml={41}>
          <ToolbarButton>
            <Svg size={18}>
              <path d="M3 1 V19" stroke="#777" />
              <rect x="4" y="4" width="13" height="5" fill="#cfcfcf" />
              <rect x="4" y="11" width="8" height="5" fill="#cfcfcf" />
            </Svg>
          </ToolbarButton>
        </ToolGroup>

        <ToolGroup $ml={40}>
          <ToolbarButton>
            <Svg size={19}>
              <rect x="8" y="8" width="10" height="10" fill="#aaa" />
              <circle cx="8" cy="8" r="7.5" fill="#f0f0f0" />
            </Svg>
          </ToolbarButton>
          <ToolbarButton>
            <Svg size={19}>
              <circle cx="8" cy="8" r="7.5" fill="#f0f0f0" />
              <rect x="8" y="6" width="10" height="12" fill="#bbb" stroke="#333" strokeWidth=".6" />
            </Svg>
          </ToolbarButton>
          <ToolbarButton>
            <Svg size={19}>
              <circle cx="10" cy="10" r="9" fill="#f0f0f0" />
              <path d="M10 10 H19 V1 H10 Z" fill="#3d3d3d" />
              <path d="M10 10 H19 M10 10 V1" fill="none" stroke="#aaa" strokeWidth=".6" />
            </Svg>
          </ToolbarButton>
        </ToolGroup>
      </Toolbar>

      <ContextBar>
        <FieldLabel $w={43}>Breite:</FieldLabel>
        <Combo $w={74}>25,7 px</Combo>
        <FieldLabel $w={64}>Deckkraft:</FieldLabel>
        <Combo $w={73}>100 %</Combo>
        <FieldLabel $w={38}>Fluss:</FieldLabel>
        <Combo $w={74}>100 %</Combo>
        <FieldLabel $w={42}>Härte:</FieldLabel>
        <Combo $w={75} $mr={7}>41 %</Combo>
        <Divider />
        <FlatButton $w={77}>Mehr</FlatButton>
        <FlatButton $w={36}>
          <Svg size={17}>
            <circle cx="10" cy="10" r="8" fill="none" stroke="#8f8f8f" />
            <circle cx="10" cy="10" r="4.5" fill="none" stroke="#8f8f8f" />
            <path d="M10 10 L17 2" stroke="#bbb" strokeWidth="1.3" />
          </Svg>
        </FlatButton>
        <CheckLabel $w={69} $ml={9}>Stabilisator</CheckLabel>
        <ToggleGroup>
          <ToggleHalf $dark>
            <Svg size={15}>
              <path d="M4 6 C8 8 9 10 9 17 M9 12 C10 9 13 7 16 6" fill="none" stroke="#ddd" strokeWidth="1.3" />
              <circle cx="16" cy="4" r="1.4" fill="none" stroke="#ddd" />
            </Svg>
          </ToggleHalf>
          <ToggleHalf>
            <Svg size={16}>
              <path d="M14 4 C7 2 3 8 5 13 C6 16 11 17 13 15" fill="none" stroke="#bbb" strokeWidth="1.2" strokeDasharray="2 1" />
              <circle cx="15" cy="4" r="1.4" fill="none" stroke="#ddd" />
              <circle cx="9" cy="16" r="1.4" fill="#ddd" />
            </Svg>
          </ToggleHalf>
        </ToggleGroup>
        <FieldLabel $w={45}>Länge:</FieldLabel>
        <Combo $w={74} $mr={15}>10</Combo>
        <FieldLabel $w={79}>Mischmodus:</FieldLabel>
        <Combo $w={77} $mr={8}>Normal</Combo>
        <Divider $left={0} $right={6} />
        <CheckLabel $w={89}>Nasse Kanten</CheckLabel>
        <CheckLabel $w={125}>Transparenz schützen</CheckLabel>
      </ContextBar>

      <Main>
        <DocColumn>
          <DocTitle>
            <span>Unterschrift freistellen [Geändert] (197.8%)</span>
            <svg width="8" height="8" viewBox="0 0 8 8"><path d="M1 1 L7 7 M7 1 L1 7" stroke="#ddd" strokeWidth="1.1" /></svg>
          </DocTitle>
          <RulerRow>
            <RulerCorner>px</RulerCorner>
            <HRuler />
            <ScrollTrackV><Arrow $dir="up" /></ScrollTrackV>
          </RulerRow>
          <ViewRow>
            <VRuler />
            <Viewport>
              <Signature />
              <ToolsPanel>
                <ToolsTitle>Werkzeuge</ToolsTitle>
                <ToolsGrid>
                  {TOOL_ICONS.map((t, i) => (
                    <ToolButton key={i} $more={t.more} $active={i === 7}>
                      <Svg size={21}>{t.icon}</Svg>
                    </ToolButton>
                  ))}
                </ToolsGrid>
                <ColorChips viewBox="0 0 78 70">
                  <circle cx="46" cy="41" r="11.5" fill="#fff" stroke="#555" />
                  <circle cx="33" cy="29" r="13" fill="#000" stroke="#222" strokeWidth="2" />
                  <path d="M44 22 C48 19 52 21 52 25 M52 25 L50 23 M44 22 L46 25" fill="none" stroke="#aaa" strokeWidth="1.2" />
                  <circle cx="27" cy="47" r="5" fill="#f0f0f0" />
                  <path d="M23.5 50.5 L30.5 43.5" stroke="#c02040" strokeWidth="2" />
                </ColorChips>
              </ToolsPanel>
            </Viewport>
            <ScrollTrackV>
              <ThumbV />
              <Arrow $dir="down" />
            </ScrollTrackV>
          </ViewRow>
          <ScrollTrackH>
            <Arrow $dir="left" />
            <ThumbH />
            <Arrow $dir="right" />
          </ScrollTrackH>
        </DocColumn>

        <Dock>
          <AdjustColumn>
            <TabBar $pad={19}>
              <Grip />
              <Tab $active>Anpassung</Tab>
              <Tab $px={4}>Effekte</Tab>
              <Tab $px={4}>Stile</Tab>
            </TabBar>
            <AdjustHeader>
              <AdjustIcon name="levels" />
              Tonwertkorrektur
            </AdjustHeader>
            <Presets>
              <Preset><PresetSig />Standard</Preset>
              <Preset><PresetSig op={0.9} />Abdunkeln</Preset>
              <Preset><PresetSig op={0.6} />Aufhellen</Preset>
            </Presets>
            {ADJUSTMENTS.map(([icon, label]) => (
              <AdjustRow key={label}>
                <AdjustIcon name={icon} />
                {label}
              </AdjustRow>
            ))}
            <Spacer />
            <BrushTab>
              <Grip />
              Pinsel
              <PanelMenu $right={5} />
            </BrushTab>
          </AdjustColumn>

          <LayersColumn>
            <TabBar $pad={18}>
              <Grip />
              <Tab $active>Ebenen</Tab>
              <Tab>Kanäle</Tab>
              <PanelMenu $right={5} />
            </TabBar>
            <LayerTools>
              <FieldLabel $w={48}>Deckkraft:</FieldLabel>
              <Combo $w={75} $mr={5}>100 %</Combo>
              <Combo $w={146} $mr={4} $pad={5}>Normal</Combo>
              <Svg size={14}>
                <circle cx="10" cy="10" r="5.5" fill="none" stroke="#8d8d8d" strokeWidth="3.5" />
              </Svg>
              <LockBox><Lock color="#9a9a9a" /></LockBox>
            </LayerTools>
            <LayerRow $h={28}>
              <LayerThumb viewBox="0 0 22 23">
                <rect x=".5" y=".5" width="21" height="22" fill="#fff" stroke="#222" />
                <circle cx="16" cy="17" r="4.5" fill="#222" />
                <path d="M13 20 L19 14" stroke="#fff" />
              </LayerThumb>
              (Anpassung - Tonwertkorrektur)
              <LayerCheck $auto><Check /></LayerCheck>
            </LayerRow>
            <LayerRow $h={27} $selected>
              <LayerThumb viewBox="0 0 22 23">
                <rect x=".5" y=".5" width="21" height="22" fill="#1c2433" stroke="#10151f" />
                <rect x="9" y="5" width="4" height="1" fill="#fff" />
              </LayerThumb>
              <span><b>Hintergrund</b> (Pixel)</span>
              <LayerLock><Lock color="#a9bfe0" /></LayerLock>
              <LayerCheck $dark><Check /></LayerCheck>
            </LayerRow>
            <Spacer />
            <LayersBottom>
              <BottomIcon $dark $w={16}>
                <svg width="12" height="14" viewBox="0 0 12 14">
                  <path d="M6 1 L11 4 L6 7 L1 4 Z M1 6.5 L6 9.5 L11 6.5 M1 9.5 L6 12.5 L11 9.5" fill="none" stroke="#c8c8c8" strokeWidth="1.4" />
                </svg>
              </BottomIcon>
              <BottomIcon $ml={84}>
                <Svg size={14}><rect width="20" height="20" fill="#e4e4e4" /><circle cx="10" cy="10" r="6" fill="#4a4a4a" /></Svg>
              </BottomIcon>
              <BottomIcon>
                <Svg size={14}><circle cx="10" cy="10" r="9" fill="#e4e4e4" /><path d="M15 3 A9 9 0 0 1 5 17 Z" fill="#555" /></Svg>
              </BottomIcon>
              <FxIcon>fx</FxIcon>
              <BottomIcon>
                <Svg size={14}><path d="M2 1 H18 V4 L11 10 L18 16 V19 H2 V16 L9 10 L2 4 Z" fill="#d8d8d8" /></Svg>
              </BottomIcon>
              <BottomIcon $ml={82}>
                <Svg size={15}><path d="M2 5 H8 L10 7 H18 V16 H2 Z" fill="#8c8c8c" /></Svg>
              </BottomIcon>
              <BottomIcon>
                <Svg size={15}><path d="M4 1 H13 L17 5 V19 H4 Z" fill="#c8c8c8" /><path d="M4 1 H13 L17 5 V19 H4 Z" fill="none" stroke="#888" strokeDasharray="2 1" /></Svg>
              </BottomIcon>
              <BottomIcon>
                <Svg size={15}><path d="M3 4 H17 M8 4 V2 H12 V4 M5 6 V19 H15 V6 M8 7 V17 M10 7 V17 M12 7 V17" fill="none" stroke="#b4b4b4" strokeWidth="1.2" /></Svg>
              </BottomIcon>
            </LayersBottom>
          </LayersColumn>
        </Dock>
      </Main>

      <StatusBar>
        <span><b>Ziehen</b> = Malen. <b>Ziehen</b>+<b>Umschalt</b> = letzten Pinselstrich fortsetzen. <b>Ziehen</b>+<b>Alt</b> = Farbpipette verwenden.</span>
      </StatusBar>
      <BottomEdge />
    </Page>
  );
}
